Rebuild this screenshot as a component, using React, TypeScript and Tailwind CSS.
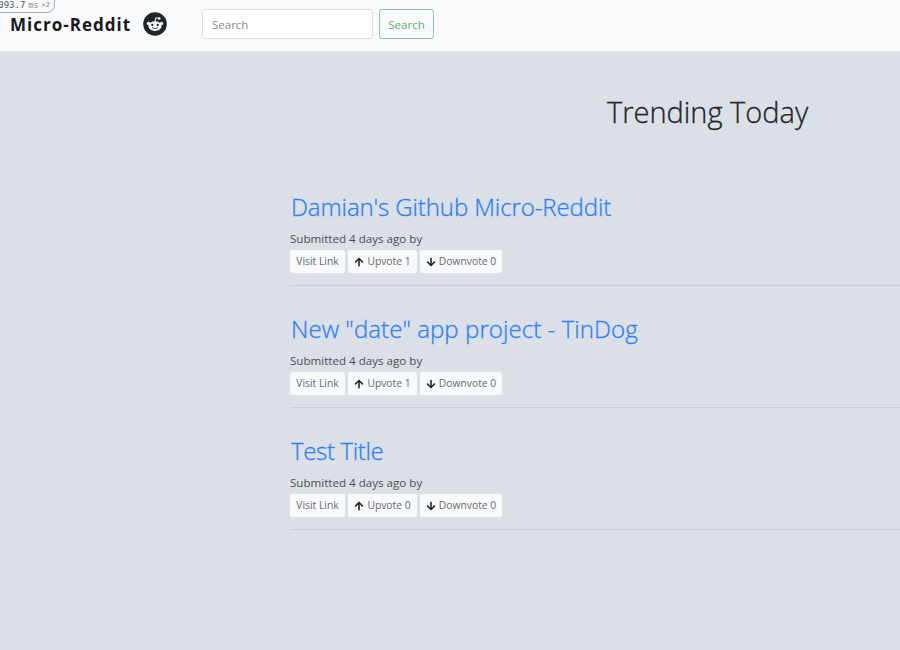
import { FaArrowDown, FaArrowUp } from "react-icons/fa";

type Post = { title: string; up: number; down: number; tracking: string };

const posts: Post[] = [
  { title: "Damian's Github Micro-Reddit", up: 1, down: 0, tracking: "tracking-[-0.1px]" },
  { title: 'New "date" app project - TinDog', up: 1, down: 0, tracking: "tracking-[0.07px]" },
  { title: "Test Title", up: 0, down: 0, tracking: "tracking-[-0.35px]" },
];

const action =
  "flex h-[23px] items-center justify-center whitespace-nowrap rounded-[2px] bg-[#f8f9fb] pt-px text-[10.3px] text-[#666a6e]";

function RedditLogo() {
  return (
    <svg viewBox="0 0 24 24" className="mt-[12px] size-[24px]" aria-hidden="true">
      <circle cx="12" cy="12" r="11.8" fill="#212529" />
      <path d="M12 10 12.8 5.7 16 6.4" fill="none" stroke="#f8f9fb" strokeWidth="1" strokeLinejoin="round" />
      <g fill="#f8f9fb">
        <circle cx="16.2" cy="6.5" r="1.3" />
        <circle cx="5.5" cy="11.5" r="1.7" />
        <circle cx="18.5" cy="11.5" r="1.7" />
        <ellipse cx="12" cy="14.1" rx="6.6" ry="4.8" />
      </g>
      <circle cx="9.3" cy="13" r="1.15" fill="#212529" />
      <circle cx="14.7" cy="13" r="1.15" fill="#212529" />
      <path d="M9.3 15.9Q12 17.7 14.7 15.9" fill="none" stroke="#212529" strokeWidth="0.8" strokeLinecap="round" />
    </svg>
  );
}

function PostRow({ post }: { post: Post }) {
  return (
    <article className="h-[100px] border-b border-[#c9cdd4]">
      <h2
        className={`h-[44px] whitespace-nowrap pl-px text-[24px] font-light leading-[42px] text-[#2b7fff] [-webkit-text-stroke:0.3px_#2b7fff] ${post.tracking}`}
      >
        {post.title}
      </h2>
      <p className="h-[18px] whitespace-nowrap text-[11.6px] leading-[18px] text-[#4b4f54]">
        Submitted 4 days ago by
      </p>
      <div className="mt-[2px] flex gap-[3px]">
        <button className={`${action} w-[55px]`}>Visit Link</button>
        <button className={`${action} w-[69px] gap-[3px]`}>
          <FaArrowUp className="size-[10px] text-[#212529]" />
          Upvote {post.up}
        </button>
        <button className={`${action} w-[82px] gap-[3px]`}>
          <FaArrowDown className="size-[10px] text-[#212529]" />
          Downvote {post.down}
        </button>
      </div>
    </article>
  );
}

export default function App() {
  return (
    <div className="relative h-[650px] w-[900px] overflow-hidden bg-[#dbdfe6] font-['Open_Sans','Noto_Sans',sans-serif]">
      <header className="flex h-[51px] items-start bg-[#f8f9fb] pl-[10px]">
        <span className="mt-[10px] w-[133px] whitespace-nowrap text-[17px] font-bold leading-[30px] tracking-[1px] text-[#17191c]">
          Micro-Reddit
        </span>
        <RedditLogo />
        <form className="ml-[35px] mt-[9px] flex gap-[6px]">
          <input
            placeholder="Search"
            className="h-[30px] w-[171px] rounded-[3px] border border-[#dcdfe3] bg-white px-[9px] text-[11.5px] placeholder:text-[#868c93]"
          />
          <button
            type="button"
            className="h-[30px] w-[55px] rounded-[3px] border border-[#8fc69c] pt-px text-[11.5px] text-[#5cae70]"
          >
            Search
          </button>
        </form>
      </header>
      <div className="absolute left-[-4px] top-[-8px] flex h-[21px] w-[59px] items-end justify-end gap-[3px] whitespace-nowrap rounded-br-[8px] border border-[#aaadb0] bg-[#f8f9fb] pb-[2px] pr-[4px] font-['DejaVu_Sans_Mono',monospace] text-[9px] leading-[10px] text-[#55585b]">
        <span>093.7</span>
        <span className="text-[8.5px] text-[#8b8e91]">ms</span>
        <span className="text-[7px] text-[#8b8e91]">×2</span>
      </div>
      <main className="pl-[290px]">
        <h1 className="ml-[317px] mt-[36px] h-[50px] whitespace-nowrap text-[29px] font-light leading-[50px] text-[#212529] [-webkit-text-stroke:0.3px_#212529]">
          Trending Today
        </h1>
        <section className="mt-[49px] flex w-[700px] flex-col gap-[22px]">
          {posts.map((post) => (
            <PostRow key={post.title} post={post} />
          ))}
        </section>
      </main>
    </div>
  );
}
